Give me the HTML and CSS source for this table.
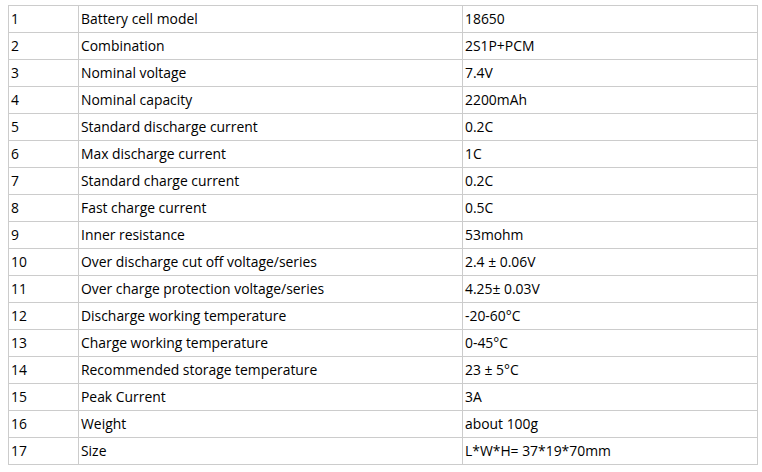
FILE: index.html
```html
<!DOCTYPE html>
<html>
<head>
<meta charset="utf-8">
<link rel="stylesheet" href="styles.css">
</head>
<body>
<table class="spec">
<colgroup><col class="c-num"><col class="c-name"><col class="c-val"></colgroup>
<tbody>
<tr><td>1</td><td>Battery cell model</td><td>18650</td></tr>
<tr><td>2</td><td>Combination</td><td>2S1P+PCM</td></tr>
<tr><td>3</td><td>Nominal voltage</td><td>7.4V</td></tr>
<tr><td>4</td><td>Nominal capacity</td><td>2200mAh</td></tr>
<tr><td>5</td><td>Standard discharge current</td><td>0.2C</td></tr>
<tr><td>6</td><td>Max discharge current</td><td>1C</td></tr>
<tr><td>7</td><td>Standard charge current</td><td>0.2C</td></tr>
<tr><td>8</td><td>Fast charge current</td><td>0.5C</td></tr>
<tr><td>9</td><td>Inner resistance</td><td>53mohm</td></tr>
<tr><td>10</td><td>Over discharge cut off voltage/series</td><td>2.4 ± 0.06V</td></tr>
<tr><td>11</td><td>Over charge protection voltage/series</td><td>4.25± 0.03V</td></tr>
<tr><td>12</td><td>Discharge working temperature</td><td>-20-60°C</td></tr>
<tr><td>13</td><td>Charge working temperature</td><td>0-45°C</td></tr>
<tr><td>14</td><td>Recommended storage temperature</td><td>23 ± 5°C</td></tr>
<tr><td>15</td><td>Peak Current</td><td>3A</td></tr>
<tr><td>16</td><td>Weight</td><td>about 100g</td></tr>
<tr><td>17</td><td>Size</td><td>L*W*H= 37*19*70mm</td></tr>
</tbody>
</table>
</body>
</html>
```
FILE: styles.css
```css
html, body {
  margin: 0;
  padding: 0;
  background: #ffffff;
}
body {
  padding: 5px 0 0 8px;
  font-family: "Open Sans", "Liberation Sans", sans-serif;
  font-size: 13.9px;
  color: #000000;
}
.spec {
  border-collapse: collapse;
  table-layout: fixed;
  width: 749px;
}
.c-num { width: 70px; }
.c-name { width: 384px; }
.c-val { width: 295px; }
.spec td {
  border: 1px solid #cccccc;
  height: 26px;
  padding: 0 2px;
  box-sizing: border-box;
  vertical-align: middle;
  line-height: 18px;
  white-space: nowrap;
}
.spec tr { height: 27px; }
```
